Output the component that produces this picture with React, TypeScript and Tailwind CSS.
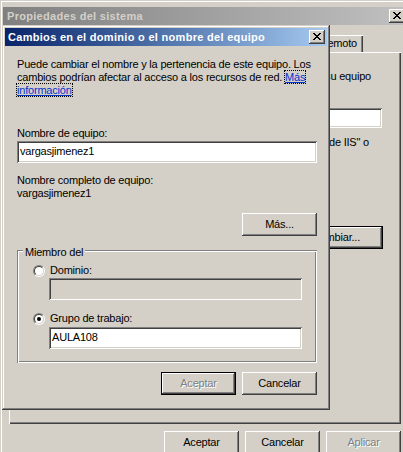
import React from 'react'

// Windows classic 3D edges
const raised = 'shadow-[inset_-1px_-1px_#404040,inset_1px_1px_#fff,inset_-2px_-2px_#808080]'
const sunken = 'shadow-[inset_1px_1px_#808080,inset_-1px_-1px_#fff,inset_2px_2px_#404040,inset_-2px_-2px_#d4d0c8]'
const link = 'text-[#0033cc] underline outline-1 outline-dotted outline-black'

function XGlyph() {
  return (
    <svg width="8" height="7" viewBox="0 0 8 7" shapeRendering="crispEdges" className="block">
      <path
        fill="#000"
        d="M0 0h2v1H0z M6 0h2v1H6z M1 1h2v1H1z M5 1h2v1H5z M2 2h4v1H2z M3 3h2v1H3z M2 4h4v1H2z M1 5h2v1H1z M5 5h2v1H5z M0 6h2v1H0z M6 6h2v1H6z"
      />
    </svg>
  )
}

function CloseBtn() {
  return (
    <div className={`w-[16px] h-[14px] pl-[4px] pt-[3px] bg-[#d4d0c8] ${raised}`}>
      <XGlyph />
    </div>
  )
}

function Btn({ children, def, disabled, w = 'w-[75px]' }: { children: React.ReactNode; def?: boolean; disabled?: boolean; w?: string }) {
  return (
    <div
      className={`${w} h-[23px] flex items-center justify-center leading-[13px] bg-[#d4d0c8] ${raised} ${def ? 'border border-black' : ''} ${
        disabled ? 'text-[#808080] [text-shadow:1px_1px_0_#fff]' : 'text-black'
      }`}
    >
      {children}
    </div>
  )
}

function Field({ value, disabled, className = '' }: { value?: string; disabled?: boolean; className?: string }) {
  return (
    <div className={`h-[22px] pl-[3px] pt-[4px] leading-[13px] whitespace-nowrap ${disabled ? 'bg-[#d4d0c8]' : 'bg-white'} ${sunken} ${className}`}>
      {value}
    </div>
  )
}

function Radio({ checked }: { checked?: boolean }) {
  return (
    <div className="w-[12px] h-[12px] shrink-0 rounded-full border border-t-[#808080] border-l-[#808080] border-r-white border-b-white">
      <div className="w-full h-full rounded-full border border-t-[#404040] border-l-[#404040] border-r-[#d4d0c8] border-b-[#d4d0c8] bg-white flex items-center justify-center">
        {checked && <div className="w-[4px] h-[4px] rounded-full bg-black" />}
      </div>
    </div>
  )
}

function SystemWindow() {
  return (
    <div className="absolute left-0 top-0 w-[410px] h-[470px] bg-[#d4d0c8] pl-[3px] pr-[3px] pt-[7px] shadow-[inset_1px_1px_#d4d0c8,inset_2px_2px_#fff]">
      <div className="h-[18px] flex items-center justify-between pl-[4px] pr-[2px] bg-linear-to-r from-[#808080] to-[#c0c0c0]">
        <span className="font-bold text-[#d4d0c8] tracking-[0.3px] leading-[13px]">Propiedades del sistema</span>
        <CloseBtn />
      </div>

      <div className="flex justify-end pr-[44px] mt-[10px]">
        <div className="h-[17px] pl-[6px] pr-[6px] pt-[2px] leading-[13px] whitespace-nowrap shadow-[inset_1px_1px_#fff,inset_-1px_0_#404040,inset_-2px_0_#808080]">
          remoto
        </div>
      </div>

      {/* tab page: only its right edge shows beside the dialog */}
      <div className="mx-[6px] h-[372px] pt-[18px] pr-[18px] flex flex-col items-end shadow-[inset_1px_1px_#fff,inset_-1px_-1px_#404040,inset_-2px_-2px_#808080]">
        <div className="mr-[12px] leading-[13px] whitespace-nowrap">su equipo</div>
        <div className={`mt-[25px] mr-[1px] w-[60px] h-[20px] bg-white ${sunken}`} />
        <div className="mt-[8px] mr-[14px] leading-[13px] whitespace-nowrap">de IIS" o</div>
        <div className="mt-[77px]">
          <Btn def w="w-[94px]">Cambiar...</Btn>
        </div>
      </div>

      <div className="mx-[6px] mt-[7px] flex justify-end gap-[6px]">
        <Btn>Aceptar</Btn>
        <Btn>Cancelar</Btn>
        <Btn disabled>Aplicar</Btn>
      </div>
    </div>
  )
}

function ChangeDialog() {
  return (
    <div className="absolute left-[2px] top-[25px] w-[328px] h-[385px] p-[3px] bg-[#d4d0c8] shadow-[inset_-1px_-1px_#404040,inset_1px_1px_#d4d0c8,inset_-2px_-2px_#808080,inset_2px_2px_#fff]">
      <div className="h-[18px] flex items-center justify-between pl-[3px] pr-[2px] bg-linear-to-r from-[#0a246a] to-[#a6caf0]">
        <span className="font-bold text-white tracking-[0.3px] leading-[13px] whitespace-nowrap">Cambios en el dominio o el nombre del equipo</span>
        <CloseBtn />
      </div>

      <div className="mt-px pl-[12px] pr-[10px] flex flex-col">
        <div className="mt-[11px] leading-[13px] whitespace-nowrap">
          <div>Puede cambiar el nombre y la pertenencia de este equipo. Los</div>
          <div>
            cambios podrían afectar al acceso a los recursos de red. <span className={link}>Más</span>
          </div>
          <div>
            <span className={link}>información</span>
          </div>
        </div>

        <div className="mt-[30px] leading-[13px]">Nombre de equipo:</div>
        <Field className="mt-px" value="vargasjimenez1" />

        <div className="mt-[11px] leading-[13px]">Nombre completo de equipo:</div>
        <div className="leading-[13px]">vargasjimenez1</div>

        <div className="mt-[13px] self-end">
          <Btn>Más...</Btn>
        </div>

        <div className="relative mt-[14px] h-[113px] pl-[16px] pr-[15px] pt-[14px] flex flex-col shadow-[inset_1px_1px_#808080,inset_-1px_-1px_#fff,inset_2px_2px_#fff,inset_-2px_-2px_#808080]">
          <span className="absolute left-[6px] -top-[4px] px-[2px] bg-[#d4d0c8] leading-[13px]">Miembro del</span>

          <label className="h-[13px] flex items-center gap-[5px] leading-[13px]">
            <Radio />
            Dominio:
          </label>
          <Field className="mt-px ml-[16px]" disabled />

          <label className="mt-[12px] h-[13px] flex items-center gap-[5px] leading-[13px]">
            <Radio checked />
            Grupo de trabajo:
          </label>
          <Field className="mt-[2px] ml-[16px]" value="AULA108" />
        </div>

        <div className="mt-[9px] flex justify-end gap-[6px]">
          <Btn def disabled>
            Aceptar
          </Btn>
          <Btn>Cancelar</Btn>
        </div>
      </div>
    </div>
  )
}

export default function App() {
  return (
    <div className="relative w-[403px] h-[452px] overflow-hidden bg-[#d4d0c8] text-black text-[11px] tracking-[-0.2px] font-['Liberation_Sans',Arial,sans-serif]">
      <SystemWindow />
      <ChangeDialog />
    </div>
  )
}
